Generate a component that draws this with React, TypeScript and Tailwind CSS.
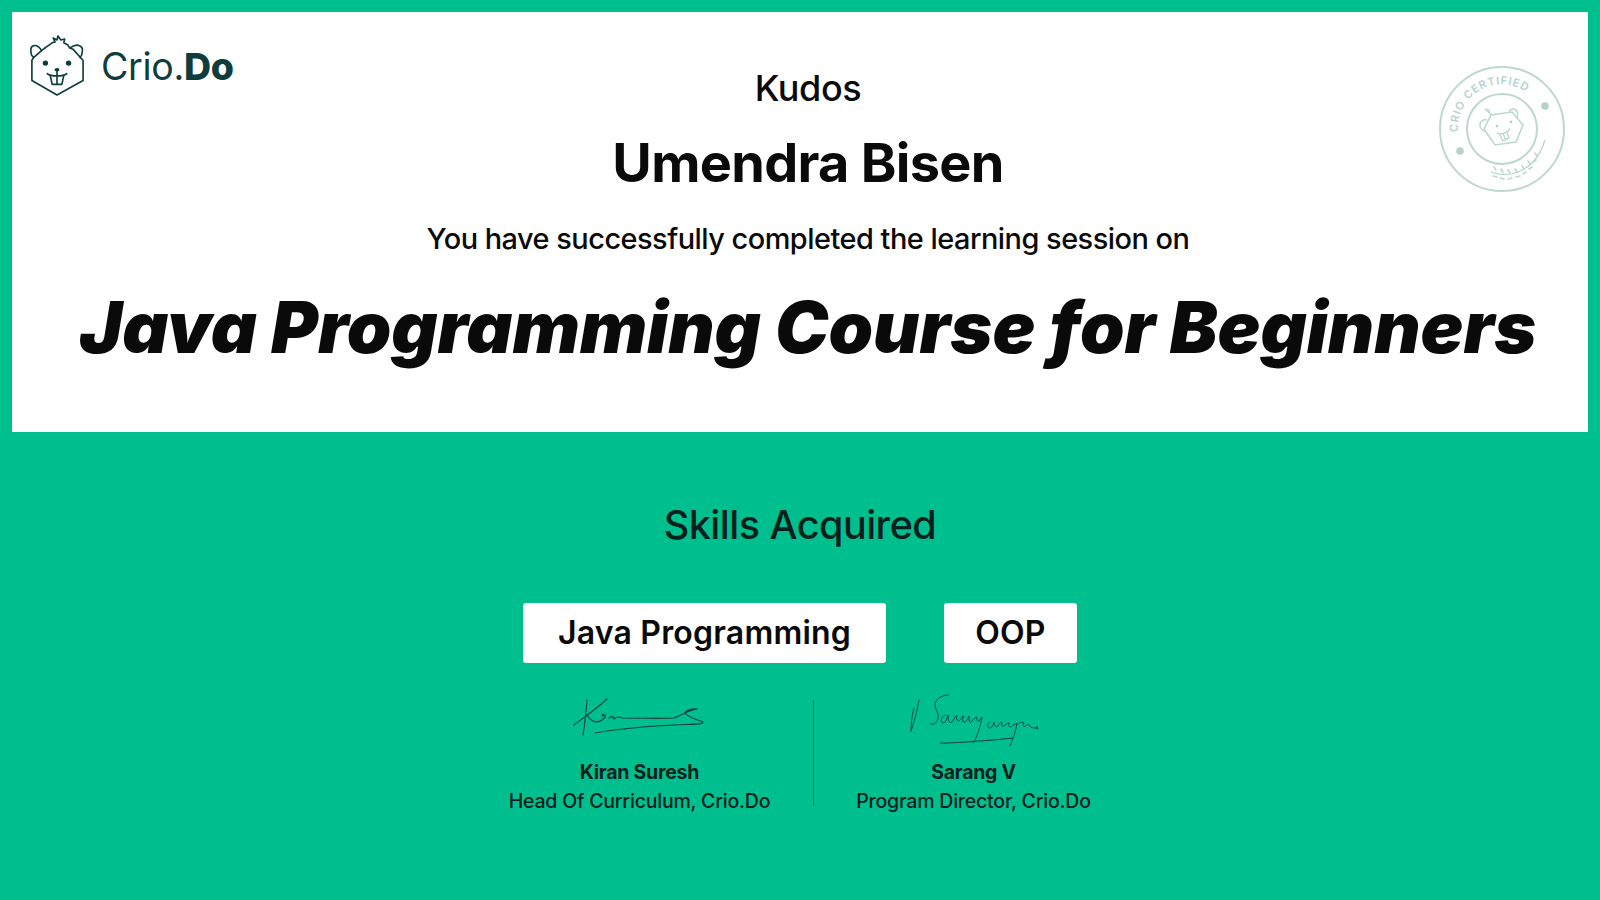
import React from 'react'

const FONT = "font-['Inter','Noto_Sans',sans-serif]"

// Beaver face used by the logo
const BeaverLogo = () => (
  <svg width="56" height="62" viewBox="0 0 58 64" fill="none" stroke="#0f3d3e" strokeWidth="1.7" strokeLinejoin="round" strokeLinecap="round">
    <path d="M17 13 L24 8 L27 7 L25 3 L29 5 L30 1 L33 5 L37 4 L36 8 L40 10 L42 13" />
    <path d="M13 16 C8 8 1 10 2 17 C2 20 3 22 5 23" />
    <path d="M43 13 C50 8 57 11 55 18 C55 20 54 22 53 23" />
    <path d="M13 16 L17 13 M42 13 L46 15 L53 23 L56 26 L56 47 L29 62 L3 47 L3 26 L5 23 L13 16" />
    <circle cx="17" cy="29" r="2.8" fill="#0f3d3e" stroke="none" />
    <circle cx="41" cy="29" r="2.8" fill="#0f3d3e" stroke="none" />
    <ellipse cx="29" cy="36" rx="2.6" ry="1.8" fill="#0f3d3e" stroke="none" />
    <path d="M19 40 C23 43 35 43 39 40 M29 37 L29 42" />
    <path d="M22 42 L24 51 L29 51 L34 51 L36 42 M29 42 L29 51" />
  </svg>
)

const Stamp = () => (
  <svg width="128" height="128" viewBox="0 0 128 128" fill="none" stroke="#bcd8d0" strokeWidth="2">
    <circle cx="64" cy="64" r="62" />
    <circle cx="64" cy="64" r="35" />
    <defs>
      <path id="stamp-arc" d="M20 67 A44 44 0 0 1 90 28" />
    </defs>
    <text fill="#b5d3cb" stroke="none" fontSize="11" fontWeight="600" fontFamily="Inter, sans-serif">
      <textPath href="#stamp-arc" textLength="98">CRIO CERTIFIED</textPath>
    </text>
    <circle cx="107" cy="41" r="3.8" fill="#b5d3cb" stroke="none" />
    <circle cx="22" cy="86" r="3.8" fill="#b5d3cb" stroke="none" />
    <path d="M46 64 L53 50 L74 47 L85 60 L78 77 L57 80 Z" strokeWidth="1.6" />
    <path d="M49 55 C41 53 39 64 47 66 M71 47 C73 41 82 44 79 53 M54 50 L47 44 L52 46" strokeWidth="1.6" />
    <circle cx="59" cy="61" r="1.4" fill="#b5d3cb" stroke="none" />
    <circle cx="73" cy="57" r="1.4" fill="#b5d3cb" stroke="none" />
    <path d="M59 68 C63 70 69 68 72 64 M62 70 L65 76 L71 73 L69 67 M65 69 L68 75" strokeWidth="1.4" />
    <path d="M53 107 C72 114 98 106 107 75" strokeWidth="1.3" />
    <path d="M55 111 L59 112 M62 113 L66 114 M70 114 L74 113 M78 112 L82 111 M85 109 L88 107 M91 104 L94 102 M95 97 L98 95 M56 102 L58 105 M63 104 L65 107 M70 105 L72 108 M77 104 L79 107 M84 101 L86 104 M90 96 L92 99 M97 88 L99 91" strokeWidth="1.6" strokeLinecap="round" />
  </svg>
)

const SignatureKiran = () => (
  <svg width="132" height="40" viewBox="0 0 132 40" fill="none" stroke="#0b3f38" strokeWidth="1.1" strokeLinecap="round" strokeLinejoin="round">
    <path d="M14 2 C13 12 12 26 10 37" />
    <path d="M1 27 C10 20 22 12 34 1" />
    <path d="M14 17 C17 23 24 26 29 22 C32 20 33 18 32 17 M36 20 C38 18 40 18 41 21 C44 18 46 19 50 20 C70 20 85 21 100 20 C107 19 112 13 124 11 C120 10 112 13 112 15 C114 18 124 22 130 24 C131 27 115 26 100 27 C80 28 50 30 22 35" />
    <circle cx="30" cy="17" r="1" fill="#0b3f38" />
  </svg>
)

const SignatureSarang = () => (
  <svg className="mb-[-13px]" width="132" height="58" viewBox="0 0 132 58" fill="none" stroke="#0b3f38" strokeWidth="0.9" strokeLinecap="round" strokeLinejoin="round">
    <path d="M3 38 C3 30 4 22 6 15 M3 38 C6 30 9 18 11 7" />
    <path d="M40 2 C32 2 26 8 27 13 C28 18 31 20 30 25 C29 31 24 33 22 30" />
    <path d="M38 22 C33 22 32 30 35 30 C38 30 39 25 40 22 C40 27 41 31 44 29 C46 27 47 23 49 22 C48 25 49 29 51 28 C54 26 53 23 56 23 C54 26 54 30 57 29 C59 28 60 25 61 23 C61 27 61 30 63 29 C65 27 67 24 69 24 C69 27 69 29 71 28 L74 24 C72 34 70 42 65 50" />
    <path d="M82 29 C79 29 79 36 82 35 C85 34 85 31 86 29 C86 33 88 35 90 33 C91 31 92 29 94 29 C93 32 94 34 96 33 C98 32 99 30 101 30 C100 34 102 35 104 33 L109 30 C108 38 105 46 102 53 M110 31 C113 29 114 29 116 30 C114 33 116 35 119 32 C120 31 121 31 122 33 C123 35 127 36 130 34 C127 33 127 36 130 36" />
    <path d="M32 50 C50 50 85 47 105 45" strokeWidth="1.1" />
  </svg>
)

const Signer = ({ signature, name, role }: { signature: React.ReactNode; name: string; role: string }) => (
  <div className="flex flex-col items-center">
    <div className="flex h-[59px] items-end justify-center">{signature}</div>
    <p className="mt-5 text-[19.5px] leading-[28px] font-bold tracking-[-0.25px] text-[#05201b]">{name}</p>
    <p className="text-[19.5px] leading-[30px] font-medium tracking-[-0.2px] text-[#05201b]">{role}</p>
  </div>
)

const App: React.FC = () => {
  return (
    <div className={`flex h-[900px] w-[1600px] flex-col overflow-hidden bg-[#00bf8f] p-3 ${FONT}`}>
      {/* Top card */}
      <div className="relative flex h-[420px] w-full shrink-0 flex-col items-center bg-white pl-4">
        <div className="absolute top-[23px] left-[17px] flex items-center gap-[16px]">
          <BeaverLogo />
          <span className="mt-[2px] text-[37.5px] leading-none tracking-[-0.3px] text-[#0f3d3e]">
            Crio.<b className="font-extrabold">Do</b>
          </span>
        </div>
        <div className="absolute top-[53px] right-[22px]">
          <Stamp />
        </div>

        <p className="mt-[54px] text-[36px] leading-[44px] font-medium tracking-[-0.4px] text-[#0a0a0a]">Kudos</p>
        <h1 className="mt-[21px] text-[54px] leading-[64px] font-bold tracking-[-0.7px] text-[#0a0a0a]">Umendra Bisen</h1>
        <p className="mt-[24px] text-[28.9px] leading-[40px] font-medium tracking-[-0.5px] text-[#0a0a0a]">
          You have successfully completed the learning session on
        </p>
        <h2 className="mt-[23px] text-[71.4px] leading-[90px] font-black whitespace-nowrap text-[#0a0a0a] italic">
          Java Programming Course for Beginners
        </h2>
      </div>

      {/* Skills */}
      <div className="flex flex-1 flex-col items-center">
        <h3 className="mt-[65px] text-[39.5px] leading-[56px] font-medium tracking-[-0.5px] text-[#05201b]">Skills Acquired</h3>
        <div className="mt-[50px] flex gap-[58px]">
          <span className="flex h-[60px] w-[363px] items-center justify-center rounded-[3px] bg-white text-[32px] font-semibold tracking-[0.2px] text-[#0a0a0a]">
            Java Programming
          </span>
          <span className="flex h-[60px] w-[133px] items-center justify-center rounded-[3px] bg-white text-[32px] font-semibold tracking-[0.2px] text-[#0a0a0a]">
            OOP
          </span>
        </div>
        <div className="mt-4 flex items-start">
          <div className="flex w-[346px] justify-center">
            <Signer signature={<SignatureKiran />} name="Kiran Suresh" role="Head Of Curriculum, Crio.Do" />
          </div>
          <div className="mt-[21px] h-[106px] w-px bg-[#0d6a58]" />
          <div className="flex w-[320px] justify-center">
            <Signer signature={<SignatureSarang />} name="Sarang V" role="Program Director, Crio.Do" />
          </div>
        </div>
      </div>
    </div>
  )
}

export default App
